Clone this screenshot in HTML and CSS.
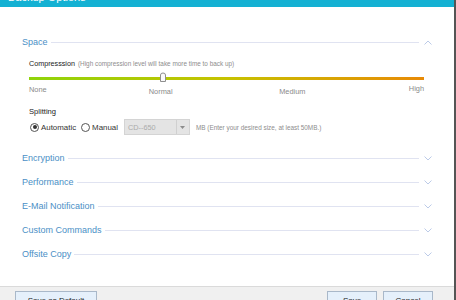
FILE: index.html
```html
<!DOCTYPE html>
<html lang="en">
<head>
    <meta charset="UTF-8">
    <title>Backup Options</title>
    <link rel="stylesheet" href="styles.css">
</head>
<body>
    <div class="window">
        <div class="titlebar">
            <span class="title">Backup Options</span>
            <span class="close">&#x2715;</span>
        </div>

        <div class="content">
            <div class="section-head">
                <span class="section-title">Space</span>
                <span class="rule"></span>
                <svg class="chevron" width="8" height="5" viewBox="0 0 8 5"><path d="M0.5 4.5 L4 1 L7.5 4.5" fill="none" stroke="#bccbe8" stroke-width="1"/></svg>
            </div>
            <div class="space-body">
                <div class="label-line">
                    <span class="label">Compresssion</span>
                    <span class="hint">(High compression level will take more time to back up)</span>
                </div>
                <div class="slider">
                    <svg class="thumb" width="8" height="11" viewBox="0 0 8 11"><path d="M1.5 9.5 V3 Q1.5 1 4 1 Q6.5 1 6.5 3 V9.5 Z" fill="#fafafa" stroke="#8e8e8e" stroke-width="1"/></svg>
                </div>
                <div class="ticks">
                    <span class="tick tick-none">None</span>
                    <span class="tick tick-normal">Normal</span>
                    <span class="tick tick-medium">Medium</span>
                    <span class="tick tick-high">High</span>
                </div>
                <div class="label split-label">Splitting</div>
                <div class="split-row">
                    <span class="radio checked"></span>
                    <span class="radio-text">Automatic</span>
                    <span class="radio"></span>
                    <span class="radio-text">Manual</span>
                    <div class="select">
                        <span class="select-value">CD--650</span>
                        <span class="select-btn"><svg width="5" height="3" viewBox="0 0 5 3"><path d="M0 0 H5 L2.5 3 Z" fill="#8c8c8c"/></svg></span>
                    </div>
                    <span class="hint">MB (Enter your desired size, at least 50MB.)</span>
                </div>
            </div>

            <div class="section-head collapsed">
                <span class="section-title">Encryption</span>
                <span class="rule"></span>
                <svg class="chevron" width="8" height="5" viewBox="0 0 8 5"><path d="M0.5 0.5 L4 4 L7.5 0.5" fill="none" stroke="#bccbe8" stroke-width="1"/></svg>
            </div>
            <div class="section-head collapsed">
                <span class="section-title">Performance</span>
                <span class="rule"></span>
                <svg class="chevron" width="8" height="5" viewBox="0 0 8 5"><path d="M0.5 0.5 L4 4 L7.5 0.5" fill="none" stroke="#bccbe8" stroke-width="1"/></svg>
            </div>
            <div class="section-head collapsed">
                <span class="section-title">E-Mail Notification</span>
                <span class="rule"></span>
                <svg class="chevron" width="8" height="5" viewBox="0 0 8 5"><path d="M0.5 0.5 L4 4 L7.5 0.5" fill="none" stroke="#bccbe8" stroke-width="1"/></svg>
            </div>
            <div class="section-head collapsed">
                <span class="section-title">Custom Commands</span>
                <span class="rule"></span>
                <svg class="chevron" width="8" height="5" viewBox="0 0 8 5"><path d="M0.5 0.5 L4 4 L7.5 0.5" fill="none" stroke="#bccbe8" stroke-width="1"/></svg>
            </div>
            <div class="section-head collapsed">
                <span class="section-title">Offsite Copy</span>
                <span class="rule"></span>
                <svg class="chevron" width="8" height="5" viewBox="0 0 8 5"><path d="M0.5 0.5 L4 4 L7.5 0.5" fill="none" stroke="#bccbe8" stroke-width="1"/></svg>
            </div>
        </div>

        <div class="footer">
            <button class="btn btn-wide">Save as Default Values</button>
            <span class="spacer"></span>
            <button class="btn">Save</button>
            <button class="btn">Cancel</button>
        </div>
    </div>
</body>
</html>
```

FILE: styles.css
```css
html, body {
    margin: 0;
    padding: 0;
    height: 300px;
    overflow: hidden;
}
body {
    background-color: #555555;
    font-family: "Liberation Sans", Arial, sans-serif;
}
.window {
    width: 454px;
    height: 300px;
    background-color: #ffffff;
    display: flex;
    flex-direction: column;
}
.titlebar {
    height: 7px;
    background-color: #14b1d3;
    overflow: hidden;
    display: flex;
    align-items: flex-end;
    padding: 0 8px 0 8px;
    color: #ffffff;
    flex-shrink: 0;
}
.title {
    font-size: 11px;
    line-height: 11px;
    margin-bottom: 4px;
}
.close {
    margin-left: auto;
    font-size: 8px;
    line-height: 8px;
    margin-bottom: 5px;
}
.content {
    flex: 1;
    padding: 29px 22px 0 22px;
}
.section-head {
    display: flex;
    align-items: center;
    height: 12px;
    gap: 3px;
}
.section-head.collapsed {
    margin-top: 12px;
}
.space-body + .section-head.collapsed {
    margin-top: 0;
}
.section-title {
    font-size: 9px;
    color: #4b8fc6;
    white-space: nowrap;
}
.rule {
    flex: 1;
    height: 1px;
    background-color: #e0e3f1;
}
.chevron {
    margin-left: 2px;
}
.space-body {
    padding: 0 8px 0 7px;
    margin-bottom: 17px;
}
.label-line {
    margin-top: 10px;
    height: 10px;
    display: flex;
    align-items: center;
    gap: 3px;
    white-space: nowrap;
}
.label {
    font-size: 7.2px;
    color: #222222;
}
.hint {
    font-size: 6.4px;
    color: #8d8d8d;
    white-space: nowrap;
}
.slider {
    margin-top: 5px;
    height: 11px;
    display: flex;
    align-items: center;
    padding-left: 130px;
    background: linear-gradient(to right, #8fd40a 0%, #c6c200 50%, #e88a06 100%) center / 100% 3px no-repeat;
}
.thumb {
    display: block;
    margin-top: -2px;
}
.ticks {
    display: grid;
    grid-template-columns: repeat(6, 1fr);
    height: 12px;
    font-size: 7.4px;
    color: #8a8a8a;
}
.tick-none {
    grid-column: 1;
    margin-top: 1px;
}
.tick-normal {
    grid-column: 2 / span 2;
    justify-self: center;
    margin-top: 3px;
}
.tick-medium {
    grid-column: 4 / span 2;
    justify-self: center;
    margin-top: 3px;
}
.tick-high {
    grid-column: 6;
    justify-self: end;
}
.split-label {
    margin-top: 11px;
    height: 10px;
    line-height: 10px;
    font-size: 7.6px;
}
.split-row {
    margin-top: 2px;
    height: 16px;
    display: flex;
    align-items: center;
}
.radio {
    width: 7px;
    height: 7px;
    border: 1px solid #555555;
    border-radius: 50%;
    background-color: #ffffff;
    position: relative;
    flex-shrink: 0;
    margin-left: 1px;
}
.radio.checked::after {
    content: "";
    position: absolute;
    left: 1.5px;
    top: 1.5px;
    width: 4px;
    height: 4px;
    border-radius: 50%;
    background-color: #333333;
}
.radio-text {
    font-size: 7.9px;
    color: #333333;
    margin-left: 2px;
    margin-right: 4px;
}
.select {
    width: 64px;
    height: 14px;
    border: 1px solid #d4d4d4;
    background-color: #e4e4e4;
    display: flex;
    align-items: center;
    margin-left: 2px;
    margin-right: 6px;
}
.select-value {
    flex: 1;
    font-size: 7.3px;
    color: #ababab;
    padding-left: 3px;
}
.select-btn {
    width: 12px;
    height: 14px;
    border-left: 1px solid #d0d0d0;
    display: flex;
    align-items: center;
    justify-content: center;
}
.footer {
    height: 9px;
    border-top: 1px solid #dadada;
    background-color: #f0f0f0;
    display: flex;
    align-items: flex-start;
    padding: 4px 21px 0 15px;
    gap: 6px;
    overflow: hidden;
    flex-shrink: 0;
}
.btn {
    height: 22px;
    width: 50px;
    border: 1px solid #a9b8c9;
    background-color: #e5f0fb;
    font-family: "Liberation Sans", Arial, sans-serif;
    font-size: 8px;
    line-height: 10px;
    color: #222222;
    margin: 0;
    display: flex;
    align-items: flex-start;
    justify-content: center;
    padding: 4px 0 0 0;
}
.btn-wide {
    width: 82px;
}
.spacer {
    flex: 1;
}
```
